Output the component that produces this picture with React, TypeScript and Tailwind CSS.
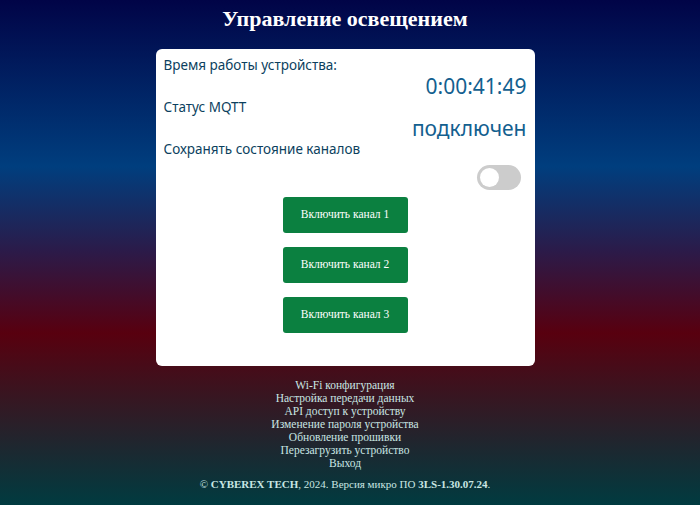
import { useState } from "react";

const links = [
  "Wi-Fi конфигурация",
  "Настройка передачи данных",
  "API доступ к устройству",
  "Изменение пароля устройства",
  "Обновление прошивки",
  "Перезагрузить устройство",
  "Выход",
];

function Toggle() {
  const [on, setOn] = useState(false);
  return (
    <button
      type="button"
      onClick={() => setOn(!on)}
      className={`relative h-[25px] w-[44px] rounded-full ${on ? "bg-[#0b8040]" : "bg-[#cccccc]"}`}
    >
      <span
        className={`absolute top-[3px] h-[19px] w-[19px] rounded-full bg-white ${on ? "left-[22px]" : "left-[3px]"}`}
      />
    </button>
  );
}

export default function App() {
  return (
    <div className="min-h-[505px] w-full bg-[linear-gradient(180deg,#010447_0%,#003e7e_33%,#2c1a48_50%,#58000f_66%,#003b40_100%)]">
      <div className="flex w-[690px] flex-col items-center font-['Liberation_Serif',serif]">
        <h1 className="mt-[6px] text-[22px] font-bold leading-[26px] text-white">Управление освещением</h1>

        <div className="mt-[17px] h-[317px] w-[379px] rounded-[6px] bg-white px-[8px] pt-[6px] font-['Noto_Sans',sans-serif] text-[#0c3f5e]">
          <div className="text-[13.5px] leading-[20px]">Время работы устройства:</div>
          <div className="mt-[1px] text-right text-[21px] leading-[21px] text-[#13608f]">0:00:41:49</div>
          <div className="text-[13.5px] leading-[20px]">Статус MQTT</div>
          <div className="mt-[1px] text-right text-[21px] leading-[21px] text-[#13608f]">подключен</div>
          <div className="text-[13.5px] leading-[20px]">Сохранять состояние каналов</div>
          <div className="mt-[6px] flex justify-end pr-[6px]">
            <Toggle />
          </div>

          <div className="mt-[7px] flex flex-col items-center gap-[14px] font-['Liberation_Serif',serif]">
            {[1, 2, 3].map((n) => (
              <button
                key={n}
                type="button"
                className="h-[36px] w-[125px] rounded-[3px] bg-[#0b8040] text-[11.5px] text-white"
              >
                Включить канал {n}
              </button>
            ))}
          </div>
        </div>

        <div className="mt-[13px] flex flex-col items-center text-[11.5px] leading-[13px] text-[#c9e6e3]">
          {links.map((l) => (
            <a key={l} href="#" className="hover:underline">
              {l}
            </a>
          ))}
        </div>

        <div className="mt-[6px] text-[11px] text-[#c9e6e3]">
          © <b>CYBEREX TECH</b>, 2024. Версия микро ПО <b>3LS-1.30.07.24</b>.
        </div>
      </div>
    </div>
  );
}
